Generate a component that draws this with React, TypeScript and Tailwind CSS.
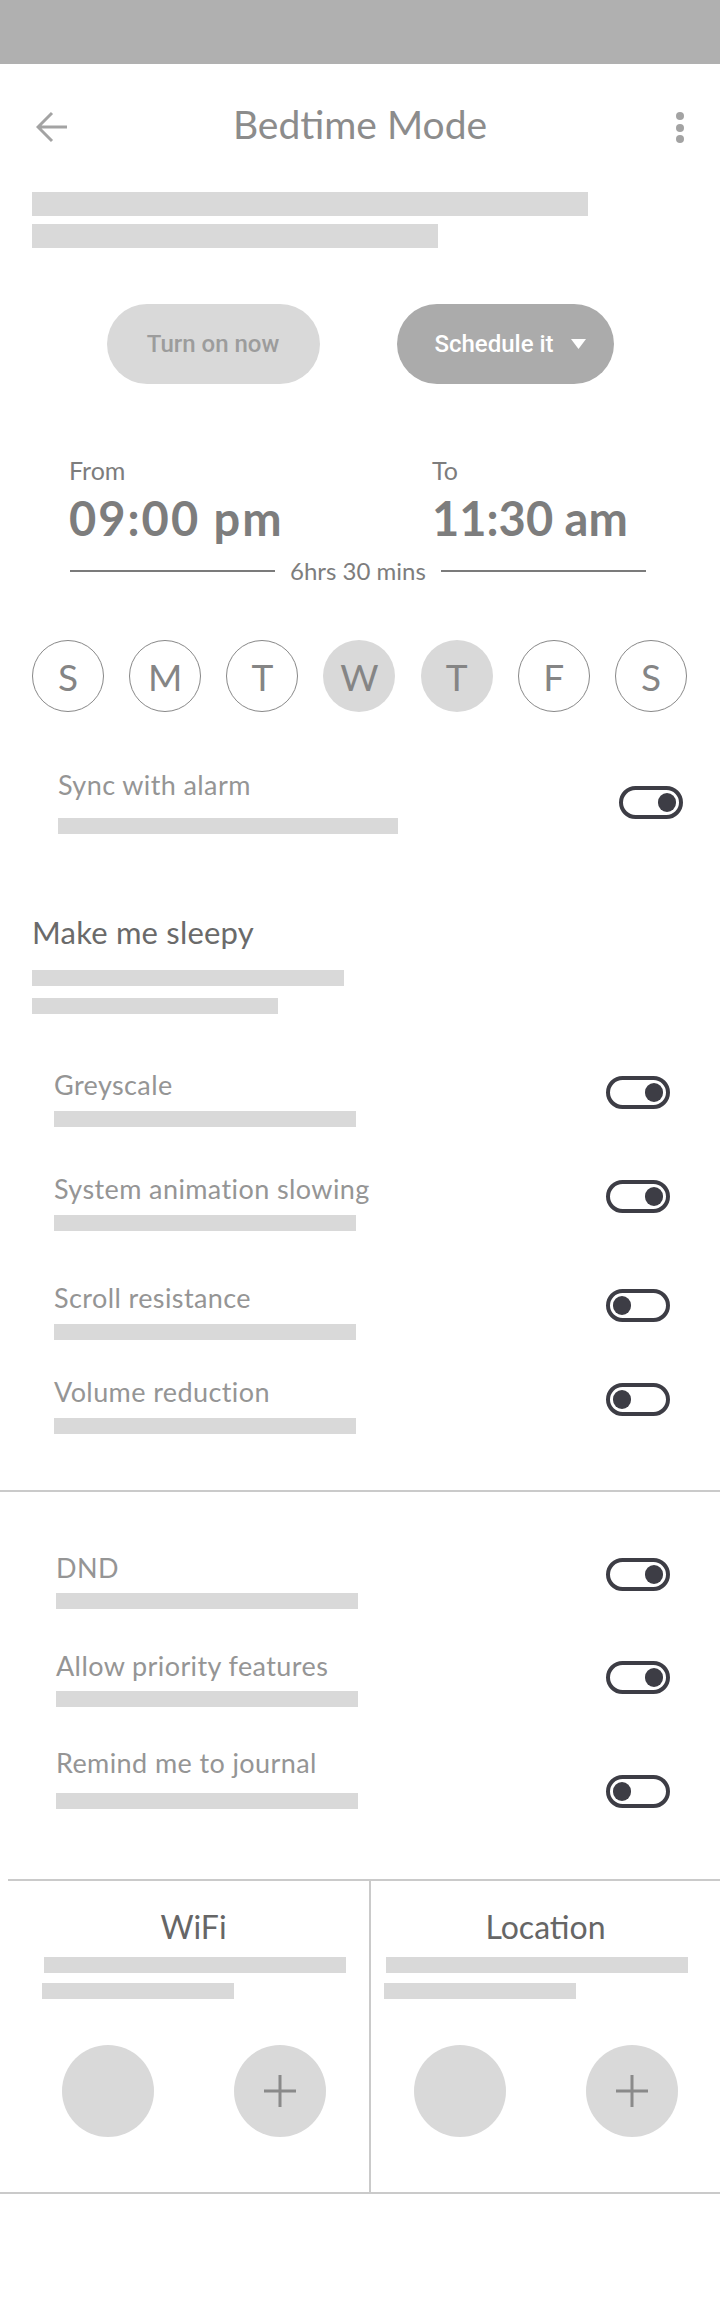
import React from 'react';

const days = [
  { l: 'S', on: false },
  { l: 'M', on: false },
  { l: 'T', on: false },
  { l: 'W', on: true },
  { l: 'T', on: true },
  { l: 'F', on: false },
  { l: 'S', on: false },
];

const sleepy = [
  { label: 'Greyscale', on: true, mt: 'mt-[57px]' },
  { label: 'System animation slowing', on: true, mt: 'mt-[48px]' },
  { label: 'Scroll resistance', on: false, mt: 'mt-[53px]' },
  { label: 'Volume reduction', on: false, mt: 'mt-[38px]' },
];

const extras = [
  { label: 'DND', on: true, mt: 'mt-[62px]', barMt: 'mt-[12px]', tMt: 'mt-[4px]' },
  { label: 'Allow priority features', on: true, mt: 'mt-[43px]', barMt: 'mt-[12px]', tMt: 'mt-[9px]' },
  { label: 'Remind me to journal', on: false, mt: 'mt-[42px]', barMt: 'mt-[17px]', tMt: 'mt-[26px]' },
];

function Toggle({ on, className = '' }: { on: boolean; className?: string }) {
  return (
    <div
      className={`w-[64px] h-[33px] shrink-0 rounded-full border-[4px] border-[#3d3d45] px-[3px] flex items-center ${
        on ? 'justify-end' : 'justify-start'
      } ${className}`}
    >
      <div className="w-[18px] h-[19px] rounded-full bg-[#3d3d45]" />
    </div>
  );
}

function Panel({ title, left }: { title: string; left: boolean }) {
  return (
    <div className={`flex flex-col pt-[30px] ${left ? 'pl-[44px]' : 'pl-[15px]'}`}>
      <div className={`text-[32px] leading-none text-[#666666] text-center ${left ? 'pr-[26px]' : 'pr-[15px]'}`}>
        {title}
      </div>
      <div className="mt-[14px] h-[16px] w-[302px] bg-[#d9d9d9]" />
      <div className="mt-[10px] h-[16px] w-[192px] -ml-[2px] bg-[#d9d9d9]" />
      <div className={`mt-[46px] flex ${left ? 'ml-[18px] gap-[80px]' : 'ml-[28px] gap-[80px]'}`}>
        <div className="w-[92px] h-[92px] rounded-full bg-[#d9d9d9]" />
        <div className="w-[92px] h-[92px] rounded-full bg-[#d9d9d9] flex items-center justify-center">
          <svg width="32" height="32" viewBox="0 0 32 32">
            <path d="M16 0v32M0 16h32" stroke="#8a8a8a" strokeWidth="3" />
          </svg>
        </div>
      </div>
    </div>
  );
}

export default function App() {
  return (
    <div className="w-[720px] min-h-[2300px] bg-white font-['Lato',sans-serif] pb-[100px]">
      {/* status bar */}
      <div className="h-[64px] bg-[#b0b0b0]" />

      {/* header */}
      <div className="grid grid-cols-[1fr_auto_1fr] items-start pt-[41px] px-[36px]">
        <svg width="32" height="32" viewBox="0 0 32 32" className="mt-[6px]">
          <path d="M31 16H3M16 2L2 16l14 14" fill="none" stroke="#a3a3a3" strokeWidth="3" />
        </svg>
        <div className="text-[39px] leading-none text-[#8c8c8c]">Bedtime Mode</div>
        <div className="justify-self-end mt-[7px] flex flex-col gap-[3.5px]">
          <div className="w-[8px] h-[8px] rounded-full bg-[#a3a3a3]" />
          <div className="w-[8px] h-[8px] rounded-full bg-[#a3a3a3]" />
          <div className="w-[8px] h-[8px] rounded-full bg-[#a3a3a3]" />
        </div>
      </div>

      {/* description */}
      <div className="mt-[48px] px-[32px] flex flex-col gap-[8px]">
        <div className="h-[24px] w-[556px] bg-[#d9d9d9]" />
        <div className="h-[24px] w-[406px] bg-[#d9d9d9]" />
      </div>

      {/* mode buttons */}
      <div className="mt-[56px] flex justify-center gap-[77px] font-['Roboto',sans-serif] font-medium text-[24px]">
        <button className="w-[213px] h-[80px] rounded-full bg-[#d9d9d9] text-[#9c9c9c]">Turn on now</button>
        <button className="w-[217px] h-[80px] rounded-full bg-[#ababab] text-white flex items-center justify-center gap-[17px] pl-[10px]">
          Schedule it
          <svg width="15" height="10" viewBox="0 0 15 10">
            <path d="M0 0h15L7.5 10z" fill="#ffffff" />
          </svg>
        </button>
      </div>

      {/* times */}
      <div className="mt-[74px] flex pl-[69px] text-[#7d7d7d]">
        <div className="w-[363px]">
          <div className="text-[25px] leading-none">From</div>
          <div className="mt-[12px] text-[47px] leading-none font-bold tracking-[2px]">09:00 pm</div>
        </div>
        <div>
          <div className="text-[25px] leading-none">To</div>
          <div className="mt-[12px] text-[47px] leading-none font-bold">11:30 am</div>
        </div>
      </div>

      <div className="mt-[17px] h-[24px] flex items-center pl-[70px]">
        <div className="w-[205px] h-[2px] bg-[#7b7b7b]" />
        <div className="mx-[15px] text-[24px] leading-none text-[#7d7d7d] whitespace-nowrap">6hrs 30 mins</div>
        <div className="w-[205px] h-[2px] bg-[#7b7b7b]" />
      </div>

      {/* days */}
      <div className="mt-[57px] flex justify-between pl-[32px] pr-[33px]">
        {days.map((d, i) => (
          <div
            key={i}
            className={`w-[72px] h-[72px] rounded-full flex items-center justify-center text-[37px] leading-none text-[#858585] ${
              d.on ? 'bg-[#d9d9d9]' : 'border-[1.5px] border-[#888888]'
            }`}
          >
            {d.l}
          </div>
        ))}
      </div>

      {/* sync with alarm */}
      <div className="mt-[59px] flex justify-between items-start pl-[58px] pr-[37px]">
        <div>
          <div className="text-[27px] leading-none tracking-[0.4px] text-[#959595]">Sync with alarm</div>
          <div className="mt-[20px] h-[16px] w-[340px] bg-[#d9d9d9]" />
        </div>
        <Toggle on className="mt-[15px]" />
      </div>

      {/* make me sleepy */}
      <div className="mt-[83px] px-[32px]">
        <div className="text-[31px] leading-none tracking-[0.2px] text-[#6a6a6a]">Make me sleepy</div>
        <div className="mt-[22px] h-[16px] w-[312px] bg-[#d9d9d9]" />
        <div className="mt-[12px] h-[16px] w-[246px] bg-[#d9d9d9]" />
      </div>

      {sleepy.map((r) => (
        <div key={r.label} className={`${r.mt} flex justify-between items-start pl-[54px] pr-[50px]`}>
          <div>
            <div className="text-[27px] leading-none tracking-[0.4px] text-[#959595]">{r.label}</div>
            <div className="mt-[13px] h-[16px] w-[302px] bg-[#d9d9d9]" />
          </div>
          <Toggle on={r.on} className="mt-[5px]" />
        </div>
      ))}

      <div className="mt-[56px] h-[2px] bg-[#cacaca]" />

      {extras.map((r) => (
        <div key={r.label} className={`${r.mt} flex justify-between items-start pl-[56px] pr-[50px]`}>
          <div>
            <div className="text-[27px] leading-none tracking-[0.4px] text-[#959595]">{r.label}</div>
            <div className={`${r.barMt} h-[16px] w-[302px] bg-[#d9d9d9]`} />
          </div>
          <Toggle on={r.on} className={r.tMt} />
        </div>
      ))}

      {/* wifi / location */}
      <div className="mt-[70px] ml-[8px] h-[2px] bg-[#cacaca]" />
      <div className="grid grid-cols-[369px_2px_1fr] h-[313px] border-b-2 border-[#cacaca]">
        <Panel title="WiFi" left />
        <div className="bg-[#cacaca]" />
        <Panel title="Location" left={false} />
      </div>
    </div>
  );
}
